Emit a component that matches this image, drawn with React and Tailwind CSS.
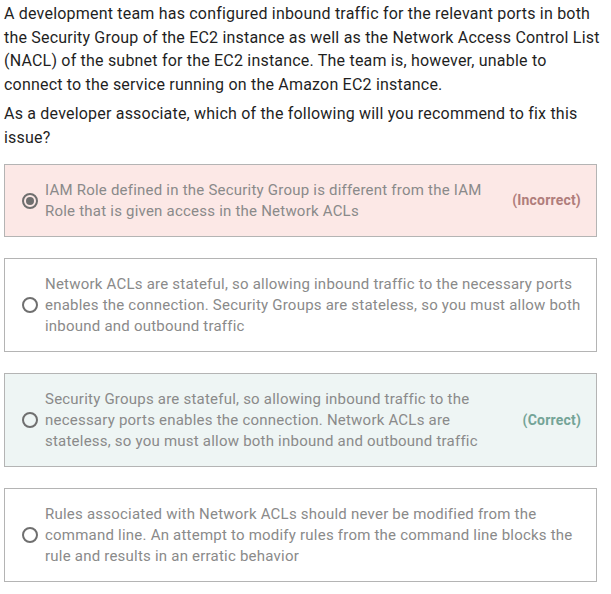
import React from 'react';

const options = [
  {
    id: 1,
    text: 'IAM Role defined in the Security Group is different from the IAM Role that is given access in the Network ACLs',
    selected: true,
    result: 'incorrect',
  },
  {
    id: 2,
    text: 'Network ACLs are stateful, so allowing inbound traffic to the necessary ports enables the connection. Security Groups are stateless, so you must allow both inbound and outbound traffic',
  },
  {
    id: 3,
    text: 'Security Groups are stateful, so allowing inbound traffic to the necessary ports enables the connection. Network ACLs are stateless, so you must allow both inbound and outbound traffic',
    result: 'correct',
  },
  {
    id: 4,
    text: 'Rules associated with Network ACLs should never be modified from the command line. An attempt to modify rules from the command line blocks the rule and results in an erratic behavior',
  },
];

const Radio = ({ checked }) => (
  <span className="shrink-0 w-4 h-4 rounded-full border-2 border-[#6f6f6f] flex items-center justify-center">
    {checked && <span className="w-2 h-2 rounded-full bg-[#6f6f6f]"></span>}
  </span>
);

const Option = ({ opt }) => {
  const bg =
    opt.result === 'incorrect' ? 'bg-[#fce8e6]' : opt.result === 'correct' ? 'bg-[#eef5f4]' : 'bg-white';
  return (
    <div className={`flex items-center border border-[#b4b4b4] pl-[17px] pr-[15px] py-[14.5px] ${bg}`}>
      <Radio checked={opt.selected} />
      <p className="flex-1 ml-[7px] text-[15px] leading-[21px] tracking-[0.22px] text-[#8a8a8a]">{opt.text}</p>
      {opt.result === 'incorrect' && (
        <span className="ml-5 text-[14px] font-bold tracking-[0.2px] text-[#b07d7b]">(Incorrect)</span>
      )}
      {opt.result === 'correct' && (
        <span className="ml-5 text-[14px] font-bold tracking-[0.2px] text-[#74a497]">(Correct)</span>
      )}
    </div>
  );
};

export default function App() {
  return (
    <div className="bg-white min-h-screen font-['Roboto',sans-serif]">
      <div className="ml-1 pt-[2px]">
        <div className="w-[604px]">
          <p className="text-[16px] leading-[23.5px] tracking-[0.2px] text-[#1f1f1f]">
            A development team has configured inbound traffic for the relevant ports in both the Security Group of the
            EC2 instance as well as the Network Access Control List (NACL) of the subnet for the EC2 instance. The team
            is, however, unable to connect to the service running on the Amazon EC2 instance.
          </p>
          <p className="mt-[6px] text-[16px] leading-[23.5px] tracking-[0.2px] text-[#1f1f1f]">
            As a developer associate, which of the following will you recommend to fix this issue?
          </p>
        </div>
        <div className="w-[593px] mt-[15px] flex flex-col gap-[21px]">
          {options.map((o) => (
            <Option key={o.id} opt={o} />
          ))}
        </div>
      </div>
    </div>
  );
}
